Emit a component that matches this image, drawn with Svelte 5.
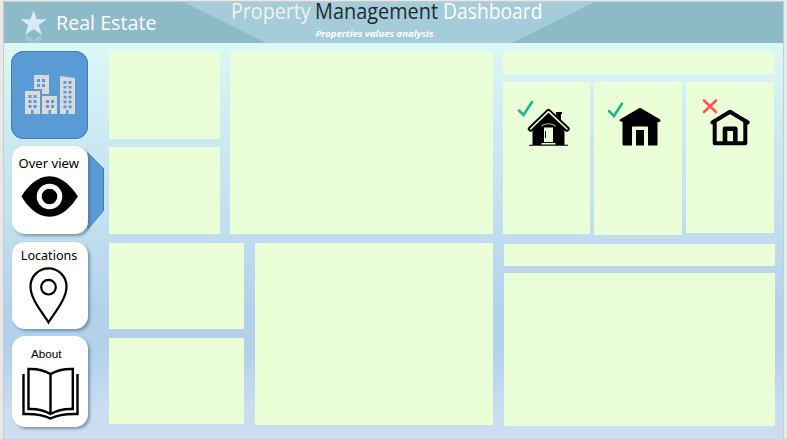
<script>
  const windows = [0, 1, 2, 3, 4, 5];
</script>

<div class="page">
  <main class="slide">
    <header>
      <svg width="779" height="41" viewBox="4 2 779 41">
        <path d="M183 2H595L511.5 43H266.5Z" fill="#a4ccd9" />
        <path d="M33.5 10.3l3.2 9h10l-8 5.7 3.1 9.7-8.3-5.8-8.3 5.8 3.1-9.7-8-5.7h10z" fill="#dce9f7" />
        <path d="M25.5 35l8 5 8-5 .6 4-2 4H27z" fill="url(#mirror)" />
        <defs>
          <linearGradient id="mirror" x1="0" y1="0" x2="0" y2="1">
            <stop offset="0" stop-color="#dce9f7" stop-opacity=".36" />
            <stop offset="1" stop-color="#dce9f7" stop-opacity=".15" />
          </linearGradient>
        </defs>
        <text class="brand" x="56" y="30" textLength="100.5" lengthAdjust="spacingAndGlyphs">Real Estate</text>
        <g class="title">
          <text x="231" y="19" textLength="79.5" lengthAdjust="spacingAndGlyphs" fill="#f2f2f2">Property</text>
          <text x="315" y="19" textLength="123" lengthAdjust="spacingAndGlyphs" fill="#222a2d">Management</text>
          <text x="443" y="19" textLength="99.5" lengthAdjust="spacingAndGlyphs" fill="#fff">Dashboard</text>
        </g>
        <text class="subtitle" x="315.5" y="37" textLength="118" lengthAdjust="spacingAndGlyphs">Properties values analysis</text>
      </svg>
    </header>

    <div class="content">
      <nav>
        <div class="tile home">
          <svg width="77" height="88" viewBox="11 51 77 88">
            <path d="M34 75h15v19h-7v-5h-8zM25 91h15v23H25zM42 96h15v18H42zM60 76l15 2v36H60z" fill="#d9d9d9" />
            <g fill="#5b9bd5">
              {#each [0, 1] as r}
                <path d="M37 {79 + r * 5}h3v3h-3zm5 0h3v3h-3z" />
                <path d="M46 {100 + r * 5}h3v3h-3zm5 0h3v3h-3z" />
              {/each}
              {#each [0, 1, 2] as r}
                <path d="M28.5 {95 + r * 5}h3v3h-3zm5 0h3v3h-3z" />
              {/each}
              {#each windows as r}
                <path d="M63.5 {81 + r * 4.9}h3v2.7h-3zm5 0h3v2.7h-3z" />
              {/each}
              <path d="M31 110h2.5v4H31zm17.500 0H51v4h-2.500zm17.500 0h2.500v4H66z" />
            </g>
          </svg>
        </div>
        <div class="tile overview">
          <svg class="pointer" width="18" height="82" viewBox="0 0 18 82">
            <path d="M.5.5L16.5 16.5V58.5L.5 77.5" fill="#5b9bd5" stroke="#3c7fbd" />
          </svg>
          <svg class="face" width="76" height="88" viewBox="12 146 76 88">
            <text x="18.5" y="168" textLength="60.5" lengthAdjust="spacingAndGlyphs">Over view</text>
            <path d="M21.5 196.5C27 187 37 176.3 49.5 176.3S72 187 77.8 196.5C72 206 62 216.8 49.5 216.8S27 206 21.5 196.5z" />
            <circle cx="49.5" cy="196.5" r="10.3" fill="none" stroke="#fff" stroke-width="5" />
          </svg>
        </div>
        <div class="tile locations">
          <svg width="76" height="87" viewBox="12 242 76 87">
            <text x="20.8" y="260" textLength="56.5" lengthAdjust="spacingAndGlyphs">Locations</text>
            <g fill="none" stroke="#000" stroke-width="2.2">
              <path d="M48.500 322.500C42 312 30.500 299 30.500 286.500A18 18.200 0 0 1 66.500 286.500C66.500 299 55 312 48.500 322.500z" />
              <circle cx="48.5" cy="287.2" r="7.3" />
            </g>
          </svg>
        </div>
        <div class="tile about">
          <svg width="76" height="91" viewBox="12 336 76 91">
            <text class="arial" x="31" y="358" textLength="30.5" lengthAdjust="spacingAndGlyphs">About</text>
            <g fill="none" stroke="#000" stroke-width="2.4">
              <path d="M50.5 374Q41 368.5 28.5 369V409Q41 408.5 50.5 414Q60 408.5 72.8 409V369Q60 368.5 50.5 374V414" />
              <path d="M23.5 374V414Q41 413.5 50.5 418.5Q60 413.5 77.5 414V374" />
            </g>
          </svg>
        </div>
      </nav>

      <div class="boards">
        <div class="top">
          <div class="pair">
            <section class="panel"></section>
            <section class="panel"></section>
          </div>
          <section class="panel large"></section>
        </div>
        <div class="bottom">
          <div class="pair">
            <section class="panel"></section>
            <section class="panel"></section>
          </div>
          <section class="panel large"></section>
        </div>
      </div>

      <div class="right">
        <section class="panel strip"></section>
        <div class="houses">
          <section class="panel h1">
            <svg width="87" height="80" viewBox="503 82 87 80">
              <path d="M519 110.500l4.500 4.500 8.500-13" fill="none" stroke="#18b886" stroke-width="2.5" stroke-linecap="round" />
              <path d="M556 112h6v2h-1v11h-4zM532.500 127l16-14 16 14v18H532.500z" />
              <path d="M530.500 129l18-17.300L567 129" fill="none" stroke="#000" stroke-width="5.4" stroke-linecap="round" stroke-linejoin="round" />
              <path d="M530.500 129l18-17.300L567 129" fill="none" stroke="#eaffd8" stroke-width="1.6" stroke-linecap="round" stroke-linejoin="round" />
              <path d="M529 145.300H568" stroke="#000" stroke-width="1.1" />
              <path d="M541.500 126q7-4.500 14 0" fill="none" stroke="#a5b298" stroke-width="1.1" />
              <path d="M544 127.500h9V142h-9zM541.500 143h14v1.600h-14z" fill="#eaffd8" />
              <path d="M545.500 131v7" stroke="#000" stroke-width=".9" />
            </svg>
          </section>
          <section class="panel h2">
            <svg width="88" height="80" viewBox="594 82 88 80">
              <path d="M609 111l5 5 8-12.5" fill="none" stroke="#18b886" stroke-width="2.5" stroke-linecap="round" />
              <path d="M619.5 121q0-1.5 1-2L640 107.700 659.500 119q1 .5 1 2.500l-3 .8V145q0 .5-1 .5H648V127.500q0-1-1-1H633q-1 0-1 1V145.500H623.500q-1 0-1-1V122zM636 130h8v15.500h-8z" />
            </svg>
          </section>
          <section class="panel h3">
            <svg width="88" height="80" viewBox="686 82 88 80">
              <path d="M704 100.500l12 11.500m0-11.500L704 112" fill="none" stroke="#ff5555" stroke-width="2.600" stroke-linecap="round" />
              <g fill="none" stroke="#000" stroke-width="4" stroke-linejoin="round" stroke-linecap="round">
                <path d="M712.300 122.500L730 111.700 747.800 122.500" />
                <path d="M714.700 121V143.200H745.300V121" />
                <path d="M725 142V128.700H735.300V142" stroke-width="4.600" />
              </g>
            </svg>
          </section>
        </div>
        <div class="lower">
          <section class="panel strip"></section>
          <section class="panel chart"></section>
        </div>
      </div>
    </div>
  </main>
</div>

<style>
  :global(body) { margin: 0; }
  .page {
    box-sizing: border-box;
    width: 787px;
    height: 439px;
    padding: 1px 3px 0;
    background: #e8e8e8;
  }
  .slide {
    position: relative;
    z-index: 0;
    box-sizing: border-box;
    width: 781px;
    height: 438px;
    border: 1px solid #c8cccd;
    border-bottom: 0;
    background: linear-gradient(#dcf9f5 41px, #cdebf2 125px, #c2dfef 225px, #b3d1eb 305px, #b3d1eb 350px, #c9def1 410px, #cddff0 437px);
  }
  header { height: 41px; background: #8dbac7; }
  svg { display: block; overflow: visible; }
  text { font-family: "Noto Sans", "Open Sans", sans-serif; font-size: 12.5px; }
  .brand { font-family: "Open Sans", sans-serif; font-size: 20px; fill: #fff; }
  .title text { font-family: "Open Sans", sans-serif; font-size: 21px; }
  .subtitle { font-size: 9.5px; font-style: italic; font-weight: 700; fill: #fff; }
  .arial { font-family: "Liberation Sans", Arial, sans-serif; font-size: 11.5px; }
  .content { display: flex; padding: 8px 8px 0 7px; }
  nav { display: flex; flex-direction: column; width: 98px; }
  .tile { width: 76px; margin-left: 1px; border-radius: 13px; background: #fff; box-shadow: 2px 2px 3px #496b8299; }
  .home {
    box-sizing: border-box;
    width: 77px;
    height: 88px;
    margin: 0 0 7px;
    background: #5b9bd5;
    box-shadow: inset 0 0 0 1px #3c7fbd;
  }
  .overview { position: relative; height: 88px; margin-bottom: 8px; }
  .pointer { position: absolute; left: 75px; top: 6px; z-index: -1; }
  .locations { height: 87px; margin-bottom: 7px; }
  .about { height: 91px; }
  .panel { background: #eaffd8; }
  .boards { width: 384px; margin: 1px 10px 0 0; }
  .top, .bottom { display: flex; height: 182px; gap: 10px; }
  .top { margin-bottom: 9px; }
  .bottom { gap: 11px; }
  .large { flex: 1; }
  .pair { display: grid; grid-template-rows: 87px 87px; gap: 8px; width: 111px; }
  .bottom .pair { grid-template-rows: 86px 86px; gap: 9px; width: 135px; }
  .right { width: 272px; margin-top: 1px; }
  .strip { width: 271px; height: 22px; }
  .houses { display: flex; align-items: flex-start; gap: 4px; height: 153px; margin: 8px 0 9px; }
  .h1 { width: 87px; height: 152px; }
  .h2 { width: 88px; height: 153px; }
  .h3 { width: 88px; height: 151px; }
  .lower { display: grid; gap: 7px; margin-left: 1px; }
  .chart { width: 271px; height: 153px; }
</style>
